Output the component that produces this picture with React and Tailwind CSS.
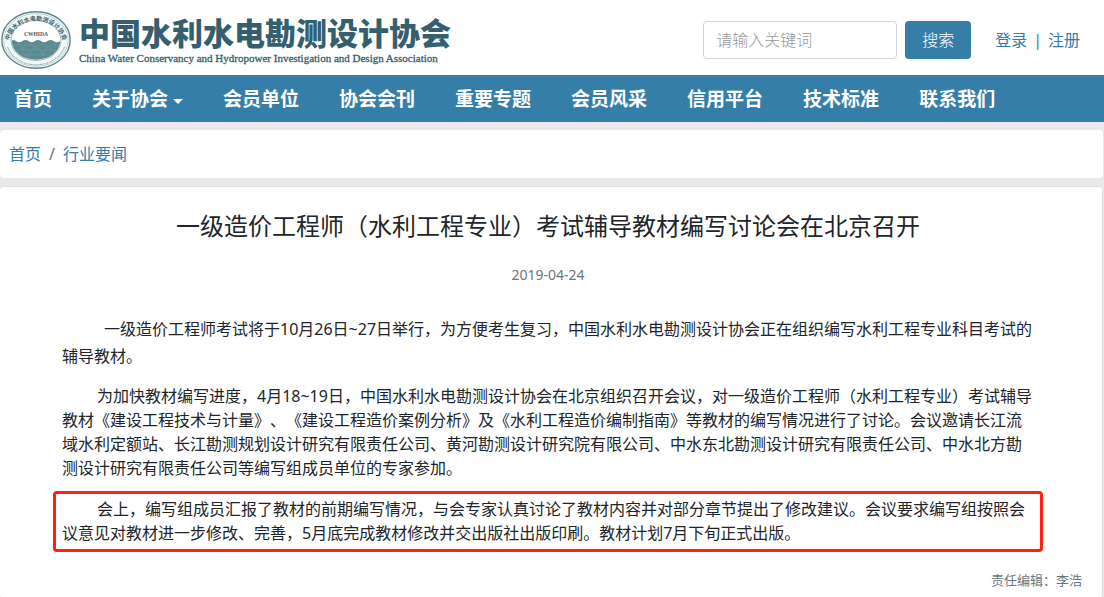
import { useState } from 'react';

const NAV_ITEMS = [
  { label: '首页' },
  { label: '关于协会', dropdown: true },
  { label: '会员单位' },
  { label: '协会会刊' },
  { label: '重要专题' },
  { label: '会员风采' },
  { label: '信用平台' },
  { label: '技术标准' },
  { label: '联系我们' },
];

function Emblem() {
  return (
    <svg viewBox="0 0 70 58" className="h-[58px] w-[70px] shrink-0" role="img" aria-label="CWHIDA">
      <defs>
        <path id="ring-top" d="M8.5 35 A26.8 22 0 1 1 61.5 35" />
        <clipPath id="disc">
          <ellipse cx="35" cy="29.5" rx="24.3" ry="19.3" />
        </clipPath>
      </defs>
      <ellipse cx="35" cy="29" rx="34.2" ry="28.2" fill="#f3f7f7" stroke="#5d8a90" strokeWidth="1.4" />
      <ellipse cx="35" cy="29" rx="32.2" ry="26.3" fill="none" stroke="#9dbabd" strokeWidth="0.6" />
      <ellipse cx="35" cy="29.5" rx="25" ry="20" fill="#fff" stroke="#7fa3a7" strokeWidth="0.7" />
      <g clipPath="url(#disc)">
        <path d="M9 30 q3-2 6 0 q3 2.4 6.5 0 q3-2 6 0 q3 2.4 6.5 0 q3-2 6 0 q3 2.4 6.5 0 q3-2 6 0 q3 2.4 6.5 0 V52 H9z" fill="#5b8a91" />
        <g fill="none" stroke="#78a0a5" strokeWidth="0.5">
          <path d="M10 36 q6-5 12 0 q6-5 13 0 q6-5 12 0 q6-5 12 0" />
          <path d="M10 41 q3-5 6-1 q6-4 12 0 q7-4 14 0 q6-4 12 0 q4-3 7 1" />
          <path d="M14 46 q5-5 10-1 q6-4 12 0 q6-4 12 0 q4-3 8 1" />
          <path d="M22 36 q-2 5 6 10 M35 36 q-6 5-7 10 M35 36 q6 4 7 9 M47 36 q-5 4-5 9" />
        </g>
      </g>
      <path d="M6.5 36 A29.6 24.4 0 0 0 63.5 36" fill="none" stroke="#8fafb3" strokeWidth="1.2" strokeDasharray="1.2 0.6" />
      <text fontSize="6" fontWeight="700" fill="#38656e" className="font-['Noto_Sans_CJK_SC',sans-serif]">
        <textPath href="#ring-top" startOffset="50%" textAnchor="middle">中国水利水电勘测设计协会</textPath>
      </text>
      <text x="35" y="24.5" fontSize="5.6" fontWeight="700" fill="#38656e" textAnchor="middle" className="font-['Liberation_Serif',serif]">
        CWHIDA
      </text>
    </svg>
  );
}

function Header() {
  const [keyword, setKeyword] = useState('');

  return (
    <header className="flex h-[75px] items-center justify-between bg-white pr-6 pl-px">
      <a href="#" className="flex items-center gap-2 pt-1 text-[#355f6e]">
        <Emblem />
        <span className="flex flex-col">
          <span className="font-['Noto_Sans_CJK_SC',sans-serif] text-[31px] leading-9 font-black whitespace-nowrap">
            中国水利水电勘测设计协会
          </span>
          <span className="font-['Liberation_Serif',serif] text-[11px] leading-4 whitespace-nowrap [-webkit-text-stroke:0.3px_#355f6e]">
            China Water Conservancy and Hydropower Investigation and Design Association
          </span>
        </span>
      </a>

      <div className="flex items-center pt-1">
        <form className="flex gap-2" onSubmit={(e) => e.preventDefault()}>
          <input
            type="text"
            aria-label="请输入关键词"
            placeholder="请输入关键词"
            value={keyword}
            onChange={(e) => setKeyword(e.target.value)}
            className="h-[38px] w-[194px] rounded border border-[#ced4da] px-3 font-light text-[#495057] outline-none placeholder:text-[#999] focus:border-[#357ea8]"
          />
          <button type="submit" className="h-[38px] rounded bg-[#357ea8] px-[17px] font-light text-white hover:bg-[#2c6b8f]">
            搜索
          </button>
        </form>
        <div className="ml-6 flex gap-1.5 whitespace-nowrap text-[#357ea8]">
          <a href="#">登录</a>
          <span>|</span>
          <a href="#">注册</a>
        </div>
      </div>
    </header>
  );
}

function NavBar() {
  return (
    <nav className="flex h-[47px] items-center gap-10 bg-[#357ea8] px-[14px] pt-0.5 text-[19px] font-bold whitespace-nowrap text-white">
      {NAV_ITEMS.map((item) => (
        <a key={item.label} href="#" className="flex items-center gap-[5px]">
          {item.label}
          {item.dropdown && (
            <span className="mt-1 border-x-[5px] border-t-[5px] border-x-transparent border-t-white" />
          )}
        </a>
      ))}
    </nav>
  );
}

function Article() {
  return (
    <article className="mr-px rounded border border-l-0 border-[#dfdfdf] bg-white pt-5 pr-5 pb-2 pl-[62px]">
      <div className="mr-12">
        <h1 className="text-center text-2xl leading-[38px] text-[#212529]">
          一级造价工程师（水利工程专业）考试辅导教材编写讨论会在北京召开
        </h1>
        <p className="mt-5 mb-[31px] text-center text-sm text-[#6c757d]">2019-04-24</p>

        <p className="mb-[14px] indent-[42px] leading-[27px]">
          一级造价工程师考试将于10月26日~27日举行，为方便考生复习，中国水利水电勘测设计协会正在组织编写水利工程专业科目考试的辅导教材。
        </p>
        <p className="mb-[11px] indent-[35px]">
          为加快教材编写进度，4月18~19日，中国水利水电勘测设计协会在北京组织召开会议，对一级造价工程师（水利工程专业）考试辅导教材《建设工程技术与计量》、《建设工程造价案例分析》及《水利工程造价编制指南》等教材的编写情况进行了讨论。会议邀请长江流域水利定额站、长江勘测规划设计研究有限责任公司、黄河勘测设计研究院有限公司、中水东北勘测设计研究有限责任公司、中水北方勘测设计研究有限责任公司等编写组成员单位的专家参加。
        </p>
        <div className="-mx-[9px] rounded border-3 border-[#ff2015] px-[6px] pt-[3px] pb-1">
          <p className="indent-[35px]">
            会上，编写组成员汇报了教材的前期编写情况，与会专家认真讨论了教材内容并对部分章节提出了修改建议。会议要求编写组按照会议意见对教材进一步修改、完善，5月底完成教材修改并交出版社出版印刷。教材计划7月下旬正式出版。
          </p>
        </div>
      </div>
      <p className="mt-[18px] text-right text-[13px] leading-5 text-[#6c757d]">责任编辑：李浩</p>
    </article>
  );
}

export default function App() {
  return (
    <div lang="zh-CN" className="min-h-screen bg-[#e9e9e9] font-['Noto_Sans','Noto_Sans_CJK_SC',sans-serif] text-base text-[#212529] [text-spacing-trim:space-all]">
      <Header />
      <NavBar />
      <main className="flex flex-col gap-2 pt-2">
        <ol className="mr-px flex h-12 items-center gap-2 rounded bg-white px-[9px]">
          <li><a href="#" className="text-[#357ea8]">首页</a></li>
          <li className="text-[#6c757d]">/</li>
          <li><a href="#" className="text-[#357ea8]">行业要闻</a></li>
        </ol>
        <Article />
      </main>
    </div>
  );
}
